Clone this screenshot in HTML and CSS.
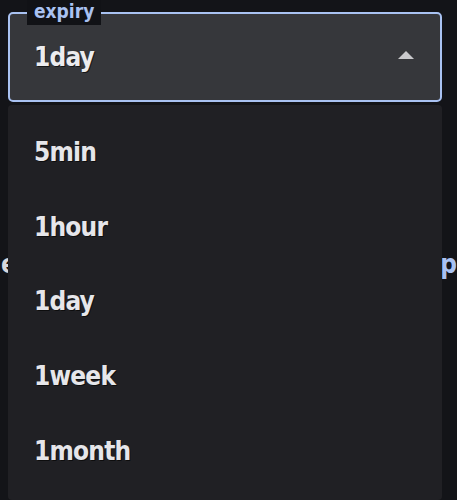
FILE: index.html
```html
<!DOCTYPE html>
<html lang="en">
    <head>
        <meta charset="utf-8">
        <meta name="viewport" content="width=device-width, initial-scale=1">
        <title>expiry</title>
        <link rel="stylesheet" href="styles.css">
    </head>
    <body>
        <div class="field">
            <div class="select">
                <span class="legend">expiry</span>
                <span class="value">1day</span>
                <svg class="arrow" width="16" height="8" viewBox="0 0 16 8">
                    <polygon points="0,8 8,0 16,8" fill="#c9c9cc"/>
                </svg>
            </div>

            <ul class="menu">
                <li>5min</li>
                <li>1hour</li>
                <li>1day</li>
                <li>1week</li>
                <li>1month</li>
            </ul>
        </div>

        <div class="behind">
            <span class="left">e</span>
            <span class="right">p</span>
        </div>
    </body>
</html>
```

FILE: styles.css
```css
body {
    box-sizing: border-box;
    min-height: 500px;
    margin: 0px;
    padding-top: 12px;
    background-color: #131418;
    font-family: "DejaVu Sans", sans-serif;
    font-stretch: condensed;
    font-weight: bold;
}

.field {
    position: relative;
    margin: 0px 15px 0px 8px;
}

.select {
    position: relative;
    display: flex;
    align-items: center;
    justify-content: space-between;
    height: 86px;
    padding: 0px 26px 0px 24px;
    border: 2px solid #a9c2f2;
    border-radius: 5px;
    background-color: #36373b;
}

.legend {
    position: absolute;
    top: -14px;
    left: 17px;
    height: 25px;
    padding: 0px 7px;
    font-size: 19px;
    line-height: 22px;
    color: #a9c2f2;
    background-color: #111216;
}

.value {
    font-size: 26px;
    letter-spacing: -0.8px;
    color: #ececef;
    text-shadow: 1px 1px 0 rgba(0, 0, 0, 0.6);
}

.arrow {
    display: block;
    margin-top: -4px;
}

.menu {
    position: absolute;
    top: 93px;
    left: 0px;
    right: 0px;
    z-index: 2;
    margin: 0px;
    padding: 10px 0px 12px;
    list-style: none;
    background-color: #202024;
    border-radius: 4px;
}

.menu li {
    display: flex;
    align-items: center;
    height: 74.6px;
    padding-left: 26px;
    font-size: 26px;
    letter-spacing: -0.8px;
    color: #e6e6ea;
    text-shadow: 1px 1px 0 rgba(0, 0, 0, 0.6);
}

.behind {
    display: flex;
    justify-content: space-between;
    margin-top: 147px;
    padding-left: 1px;
    font-size: 26px;
    line-height: 30px;
}

.behind .left {
    color: #d8d8dc;
}

.behind .right {
    color: #a9c2f2;
}
```
